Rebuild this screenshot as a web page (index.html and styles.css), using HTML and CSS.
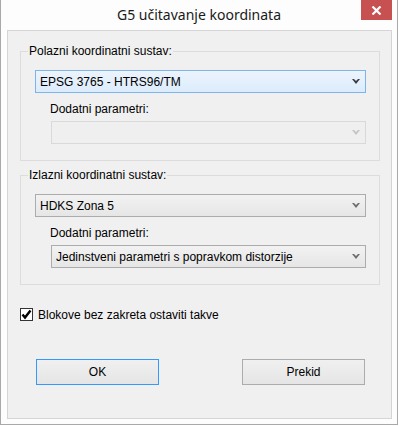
FILE: index.html
```html
<!DOCTYPE html>
<html>
  <head>
    <meta charset=utf-8>
    <title>G5 učitavanje koordinata</title>
    <link rel="stylesheet" href="styles.css">
  </head>
  <body>
    <div class="window">
      <div class="titlebar">
        <span></span>
        <h1 class="title">G5 učitavanje koordinata</h1>
        <button class="close">
          <svg width="11" height="9" viewBox="0 0 11 9"><path d="M1.5 0.5 L9.5 8.5 M9.5 0.5 L1.5 8.5" stroke="#fff" stroke-width="2.2" fill="none"/></svg>
        </button>
      </div>
      <div class="client">
        <fieldset class="group">
          <legend>Polazni koordinatni sustav:</legend>
          <div class="group-body">
            <div class="combo focus">
              <span>EPSG 3765 - HTRS96/TM</span>
              <svg width="8" height="5" viewBox="0 0 8 5"><path d="M0 0 H2 L4 2 L6 0 H8 L4 5 Z" fill="#3c3c3c"/></svg>
            </div>
            <div class="sub">
              <p class="label">Dodatni parametri:</p>
              <div class="combo disabled">
                <span></span>
                <svg width="8" height="5" viewBox="0 0 8 5"><path d="M0 0 H2 L4 2 L6 0 H8 L4 5 Z" fill="#c4c4c4"/></svg>
              </div>
            </div>
          </div>
        </fieldset>
        <fieldset class="group second">
          <legend>Izlazni koordinatni sustav:</legend>
          <div class="group-body">
            <div class="combo">
              <span>HDKS Zona 5</span>
              <svg width="8" height="5" viewBox="0 0 8 5"><path d="M0 0 H2 L4 2 L6 0 H8 L4 5 Z" fill="#6d6d6d"/></svg>
            </div>
            <div class="sub">
              <p class="label">Dodatni parametri:</p>
              <div class="combo">
                <span>Jedinstveni parametri s popravkom distorzije</span>
                <svg width="8" height="5" viewBox="0 0 8 5"><path d="M0 0 H2 L4 2 L6 0 H8 L4 5 Z" fill="#6d6d6d"/></svg>
              </div>
            </div>
          </div>
        </fieldset>
        <div class="check">
          <span class="box">
            <svg width="11" height="11" viewBox="0 0 11 11"><path d="M1.5 5.5 L4 8.5 L9.5 1.5" stroke="#000" stroke-width="2.4" fill="none"/></svg>
          </span>
          <span>Blokove bez zakreta ostaviti takve</span>
        </div>
        <div class="buttons">
          <button class="btn default">OK</button>
          <button class="btn">Prekid</button>
        </div>
      </div>
    </div>
  </body>
</html>
```

FILE: styles.css
```css
body {
  margin: 0;
  font-family: "Liberation Sans", Arial, sans-serif;
  font-size: 12px;
  color: #000;
}

.window {
  box-sizing: border-box;
  width: 398px;
  height: 425px;
  display: flex;
  flex-direction: column;
  background: #fdfdfd;
  border: 1px solid #a9a9a9;
  border-top: none;
}

.titlebar {
  height: 30px;
  display: grid;
  grid-template-columns: 1fr auto 1fr;
}
.title {
  margin: 0;
  font-family: "Noto Sans", sans-serif;
  font-weight: normal;
  font-size: 14px;
  line-height: 30px;
  color: #1a1a1a;
}
.close {
  justify-self: end;
  align-self: start;
  width: 31px;
  height: 20px;
  margin-right: 5px;
  padding: 0;
  border: none;
  background: #c75050;
  display: flex;
  align-items: center;
  justify-content: center;
}
.close svg { display: block; }

.client {
  flex: 1;
  margin: 0 5px 5px 6px;
  padding: 13px 11px 0 12px;
  border: 1px solid #d5d5d5;
  background: #f0f0f0;
}

.group {
  margin: 0;
  padding: 0;
  min-width: 0;
  border: 1px solid #dcdcdc;
}
.group legend {
  margin-left: 7px;
  padding: 0 1px;
  line-height: 14px;
}
.second { margin-top: 7px; }

.group-body {
  padding: 12px 13px 16px 14px;
}

.combo {
  box-sizing: border-box;
  height: 23px;
  display: flex;
  align-items: center;
  justify-content: space-between;
  padding: 0 5px 0 4px;
  border: 1px solid #acacac;
  background: linear-gradient(#f2f2f2, #e6e6e6);
}
.combo span { padding-top: 1px; }
.combo svg { display: block; }
.combo.focus {
  border-color: #7eb4ea;
  background: linear-gradient(#ecf4fc, #dcecfc);
}
.combo.disabled {
  border-color: #d9d9d9;
  background: #efefef;
}

.sub {
  margin-left: 16px;
}
.label {
  margin: 9px 0 5px -1px;
  line-height: 14px;
}

.check {
  margin-top: 23px;
  display: flex;
  align-items: center;
  gap: 5px;
  height: 13px;
}
.box {
  box-sizing: border-box;
  width: 13px;
  height: 13px;
  border: 1px solid #333;
  background: #fff;
  display: flex;
  align-items: center;
  justify-content: center;
}
.box svg { display: block; }

.buttons {
  margin-top: 38px;
  display: flex;
  justify-content: space-between;
  padding: 0 15px 0 16px;
}
.btn {
  box-sizing: border-box;
  width: 123px;
  height: 26px;
  font-family: "Liberation Sans", Arial, sans-serif;
  font-size: 12px;
  color: #000;
  border: 1px solid #acacac;
  background: linear-gradient(#f0f0f0, #e5e5e5);
  padding: 0;
}
.btn.default {
  border-color: #3399ff;
}
```
